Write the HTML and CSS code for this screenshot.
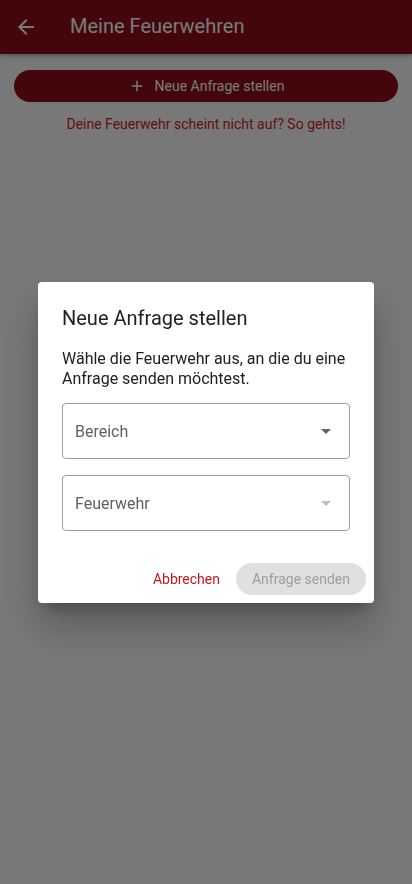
FILE: index.html
```html
<!DOCTYPE html>
<html lang="de">

<head>
    <meta charset="UTF-8">
    <meta name="viewport" content="width=device-width, initial-scale=1.0">
    <title>Meine Feuerwehren</title>
    <link rel="stylesheet" href="styles.css">
</head>

<body>
    <header class="appBar">
        <svg class="backIcon" viewBox="0 0 24 24" width="24" height="24">
            <path d="M20 11H7.83l5.59-5.59L12 4l-8 8 8 8 1.41-1.41L7.83 13H20v-2z" fill="currentColor" />
        </svg>
        <h1 class="appTitle">Meine Feuerwehren</h1>
    </header>

    <main class="content">
        <button class="newRequest">
            <svg viewBox="0 0 24 24" width="18" height="18">
                <path d="M19 13h-6v6h-2v-6H5v-2h6V5h2v6h6v2z" fill="currentColor" />
            </svg>
            <span>Neue Anfrage stellen</span>
        </button>
        <p class="helpLink">Deine Feuerwehr scheint nicht auf? So gehts!</p>
    </main>

    <div class="scrim">
        <div class="dialog">
            <h2 class="dialogTitle">Neue Anfrage stellen</h2>
            <p class="dialogText">Wähle die Feuerwehr aus, an die du eine Anfrage senden möchtest.</p>
            <div class="field">
                <span class="fieldLabel">Bereich</span>
                <span class="caret"></span>
            </div>
            <div class="field">
                <span class="fieldLabel">Feuerwehr</span>
                <span class="caret disabled"></span>
            </div>
            <div class="actions">
                <button class="textButton">Abbrechen</button>
                <button class="sendButton" disabled>Anfrage senden</button>
            </div>
        </div>
    </div>
</body>

</html>
```

FILE: styles.css
```css
html {
    height: 100%;
}

body {
    margin: 0;
    height: 100%;
    font-family: Roboto, "Noto Sans", sans-serif;
    background-color: #fafafa;
    overflow: hidden;
}

.appBar {
    display: flex;
    align-items: center;
    height: 54px;
    background-color: #8c0e15;
    color: white;
    box-shadow: rgba(0, 0, 0, 0.3) 0px 2px 4px;
}

.backIcon {
    margin-left: 14px;
    margin-right: 32px;
}

.appTitle {
    margin: 0;
    font-size: 20px;
    font-weight: 400;
    padding-bottom: 2px;
}

.content {
    display: flex;
    flex-direction: column;
    align-items: center;
    padding: 16px 14px;
}

.newRequest {
    display: flex;
    align-items: center;
    justify-content: center;
    gap: 9px;
    width: 100%;
    height: 32px;
    border: none;
    border-radius: 16px;
    background-color: #8c0e15;
    color: white;
    font-family: Roboto, sans-serif;
    font-size: 14px;
}

.helpLink {
    margin: 14px 0 0;
    font-size: 14px;
    color: #cf1f25;
}

.scrim {
    position: fixed;
    inset: 0;
    background-color: rgba(0, 0, 0, 0.52);
    display: flex;
    justify-content: center;
    align-items: flex-start;
    padding-top: 282px;
}

.dialog {
    width: 336px;
    box-sizing: border-box;
    background-color: white;
    border-radius: 4px;
    padding: 24px 8px 8px 24px;
    box-shadow: rgba(0, 0, 0, 0.3) 0px 11px 15px -7px, rgba(0, 0, 0, 0.2) 0px 24px 38px 3px;
}

.dialogTitle {
    margin: 0;
    font-size: 20px;
    font-weight: 400;
    line-height: 24px;
    color: #212121;
}

.dialogText {
    margin: 19px 16px 14px 0;
    font-size: 16px;
    line-height: 20px;
    color: #212121;
}

.field {
    display: flex;
    align-items: center;
    justify-content: space-between;
    width: 288px;
    height: 56px;
    box-sizing: border-box;
    border: solid 1px #9e9e9e;
    border-radius: 4px;
    padding: 0 18px 0 12px;
    margin-bottom: 16px;
}

.fieldLabel {
    font-size: 16px;
    color: #616161;
}

.caret {
    width: 0;
    height: 0;
    border-left: 5px solid transparent;
    border-right: 5px solid transparent;
    border-top: 5px solid #616161;
}

.caret.disabled {
    border-top-color: #bdbdbd;
}

.actions {
    display: flex;
    justify-content: flex-end;
    align-items: center;
    gap: 16px;
    margin-top: 32px;
}

.textButton {
    border: none;
    background: none;
    padding: 0;
    font-family: Roboto, sans-serif;
    font-size: 14px;
    color: #c0181e;
}

.sendButton {
    height: 32px;
    padding: 0 16px;
    border: none;
    border-radius: 16px;
    background-color: #e0e0e0;
    color: #9e9e9e;
    font-family: Roboto, sans-serif;
    font-size: 14px;
}
```
